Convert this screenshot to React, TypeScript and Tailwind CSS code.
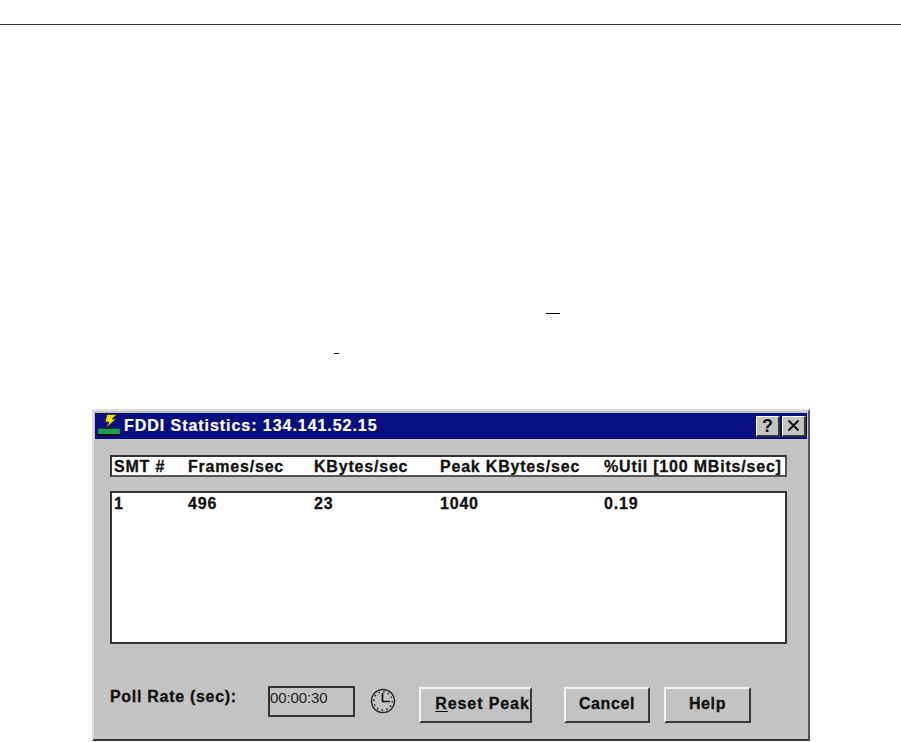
function Row({ cells }: { cells: string[] }) {
  return (
    <div className="flex text-[16px] font-bold leading-[17px] tracking-[0.8px] text-[#111] whitespace-nowrap [-webkit-text-stroke:0.3px_#111]">
      <span className="w-[74px]">{cells[0]}</span>
      <span className="w-[126px]">{cells[1]}</span>
      <span className="w-[126px]">{cells[2]}</span>
      <span className="w-[164px]">{cells[3]}</span>
      <span>{cells[4]}</span>
    </div>
  );
}

function Btn({ w, children, ml, pl }: { w: string; children: React.ReactNode; ml: string; pl: string }) {
  return (
    <div
      className={`${w} ${ml} ${pl} mt-px pb-[2px] h-[36px] flex items-center justify-center whitespace-nowrap text-[16px] font-bold tracking-[0.6px] text-[#111] [-webkit-text-stroke:0.3px_#111] bg-[#c3c3c3] border-t-2 border-l-2 border-t-[#f4f4f4] border-l-[#f4f4f4] border-r-2 border-b-2 border-r-[#3a3a3a] border-b-[#3a3a3a]`}
    >
      <span>{children}</span>
    </div>
  );
}

export default function App() {
  return (
    <div className="w-[901px] h-[742px] bg-white overflow-hidden font-['Liberation_Sans',Arial,sans-serif]">
      <div className="h-[24px]" />
      <div className="h-px bg-[#333]" />
      <div className="ml-[546px] mt-[288px] w-[14px] h-px bg-black" />
      <div className="ml-[334px] mt-[39px] w-[5px] h-px bg-black" />
      <div className="ml-[92px] mt-[55px] w-[718px] h-[332px] bg-[#c3c3c3] border-t-2 border-l-2 border-t-[#dcdcdc] border-l-[#dcdcdc] border-r-2 border-b-2 border-r-[#555] border-b-[#333] flex flex-col">
        <div className="mt-[2px] mx-[1px] h-[26px] bg-[#0a0f80] flex items-center pl-[2px] pr-[1px]">
          <svg width="24" height="24" viewBox="0 0 24 24" className="shrink-0">
            <path d="M10 0.5 L20 0.5 L15 5 L19 5 L9 14 L12 8 L8 8 Z" fill="#eee020" stroke="#3a3410" strokeWidth="0.9" />
            <rect x="1.5" y="15" width="21" height="5" fill="#1f9a4f" stroke="#0b5" strokeWidth="0.5" />
            <rect x="0" y="20" width="23" height="2" fill="#0a0a0a" />
            <rect x="8" y="13" width="7" height="2" fill="#222" />
          </svg>
          <span className="ml-[3px] text-white text-[16px] font-bold tracking-[0.95px] leading-none [-webkit-text-stroke:0.2px_#fff]">FDDI Statistics: 134.141.52.15</span>
          <div className="ml-auto flex gap-[2px]">
            <div className="w-[24px] h-[21px] bg-[#c3c3c3] border-t border-l border-t-white border-l-white border-r-2 border-b-2 border-r-[#333] border-b-[#333] flex items-center justify-center text-[18px] font-bold text-[#111] leading-none">?</div>
            <div className="w-[24px] h-[21px] bg-[#c3c3c3] border-t border-l border-t-white border-l-white border-r-2 border-b-2 border-r-[#333] border-b-[#333] flex items-center justify-center">
              <svg width="13" height="11" viewBox="0 0 13 11"><path d="M1.5 0.5 L11.5 10.5 M11.5 0.5 L1.5 10.5" stroke="#111" strokeWidth="2" /></svg>
            </div>
          </div>
        </div>
        <div className="ml-[16px] mt-[16px] w-[677px] h-[22px] bg-white border-2 border-[#333] border-r-[#555] border-b-[#555] pl-[2px] flex items-center">
          <Row cells={["SMT #", "Frames/sec", "KBytes/sec", "Peak KBytes/sec", "%Util [100 MBits/sec]"]} />
        </div>
        <div className="ml-[16px] mt-[14px] w-[677px] h-[153px] bg-white border-2 border-[#333] pl-[2px] pt-[2px]">
          <Row cells={["1", "496", "23", "1040", "0.19"]} />
        </div>
        <div className="flex ml-[16px] mt-[42px] items-start">
          <span className="mt-[1px] w-[158px] text-[16px] font-bold tracking-[0.7px] text-[#111] leading-[20px] whitespace-nowrap [-webkit-text-stroke:0.3px_#111]">Poll Rate (sec):</span>
          <div className="w-[87px] h-[31px] border-2 border-[#333] text-[15px] text-[#222] leading-[20px] tracking-[-0.1px]">00:00:30</div>
          <svg width="26" height="26" viewBox="0 0 26 26" className="ml-[15px] mt-[2px]">
            <circle cx="13" cy="13" r="11.5" fill="none" stroke="#222" strokeWidth="1.4" />
            <circle cx="13" cy="13" r="9.2" fill="none" stroke="#222" strokeWidth="1.5" strokeDasharray="1.5 3.3" />
            <path d="M12.5 5 V13.5 H20" fill="none" stroke="#111" strokeWidth="1.7" />
          </svg>
          <Btn w="w-[113px]" ml="ml-[23px]" pl="pl-[14px]">
            <span className="tracking-[0.9px]">
              <span className="underline underline-offset-2">R</span>eset Peak
            </span>
          </Btn>
          <Btn w="w-[86px]" ml="ml-[32px]" pl="pl-0">Cancel</Btn>
          <Btn w="w-[87px]" ml="ml-[14px]" pl="pl-0">Help</Btn>
        </div>
      </div>
    </div>
  );
}
